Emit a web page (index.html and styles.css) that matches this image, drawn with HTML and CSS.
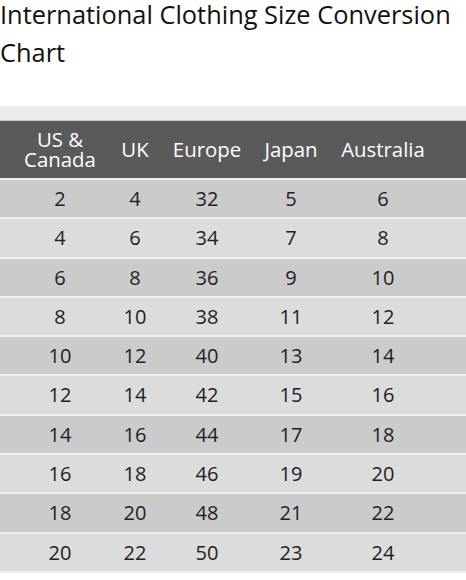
FILE: index.html
```html
<!DOCTYPE html>
<html>
<head>
<meta charset="utf-8">
<link rel="stylesheet" href="styles.css">
</head>
<body>
<h1 class="title">International Clothing Size Conversion Chart</h1>
<div class="band">
<table class="chart">
<thead>
<tr><th class="c-us">US &amp;<br>Canada</th><th class="c-uk">UK</th><th class="c-eu">Europe</th><th class="c-jp">Japan</th><th class="c-au">Australia</th></tr>
</thead>
<tbody>
<tr><td>2</td><td>4</td><td>32</td><td>5</td><td>6</td></tr>
<tr><td>4</td><td>6</td><td>34</td><td>7</td><td>8</td></tr>
<tr><td>6</td><td>8</td><td>36</td><td>9</td><td>10</td></tr>
<tr><td>8</td><td>10</td><td>38</td><td>11</td><td>12</td></tr>
<tr><td>10</td><td>12</td><td>40</td><td>13</td><td>14</td></tr>
<tr><td>12</td><td>14</td><td>42</td><td>15</td><td>16</td></tr>
<tr><td>14</td><td>16</td><td>44</td><td>17</td><td>18</td></tr>
<tr><td>16</td><td>18</td><td>46</td><td>19</td><td>20</td></tr>
<tr><td>18</td><td>20</td><td>48</td><td>21</td><td>22</td></tr>
<tr><td>20</td><td>22</td><td>50</td><td>23</td><td>24</td></tr>
</tbody>
</table>
</div>
</body>
</html>
```
FILE: styles.css
```css
html, body {
  margin: 0;
  padding: 0;
  background: #fff;
}
body {
  font-family: "Open Sans", "Liberation Sans", sans-serif;
  color: #1a1a1a;
}
.title {
  font-size: 25.4px;
  font-weight: 400;
  line-height: 38px;
  margin: -5px 0 0 0;
  color: #111;
}
.band {
  margin-top: 35px;
  background: #ececec;
  padding-top: 14px;
}
.chart {
  width: 100%;
  table-layout: fixed;
  border-collapse: collapse;
  border-top: 1px solid #c8c8c8;
}
.chart th,
.chart td {
  padding: 0;
  text-align: center;
}
.chart th:first-child,
.chart td:first-child {
  padding-left: 11px;
}
.chart th:last-child,
.chart td:last-child {
  padding-right: 29px;
}
.c-us { width: 98px; }
.c-uk { width: 52px; }
.c-eu { width: 92px; }
.c-jp { width: 76px; }
.chart th {
  background: #5a5a5a;
  color: #fff;
  font-weight: 400;
  font-size: 20.4px;
  line-height: 19.5px;
  padding-top: 9px;
  padding-bottom: 9px;
  border-bottom: 2px solid #ececec;
}
.chart td {
  font-size: 20px;
  line-height: 37.3px;
  color: #222;
  border-bottom: 2px solid #efefef;
}
.chart tbody tr:nth-child(odd) td {
  background: #cbcbcb;
}
.chart tbody tr:nth-child(even) td {
  background: #dcdcdc;
}
```
